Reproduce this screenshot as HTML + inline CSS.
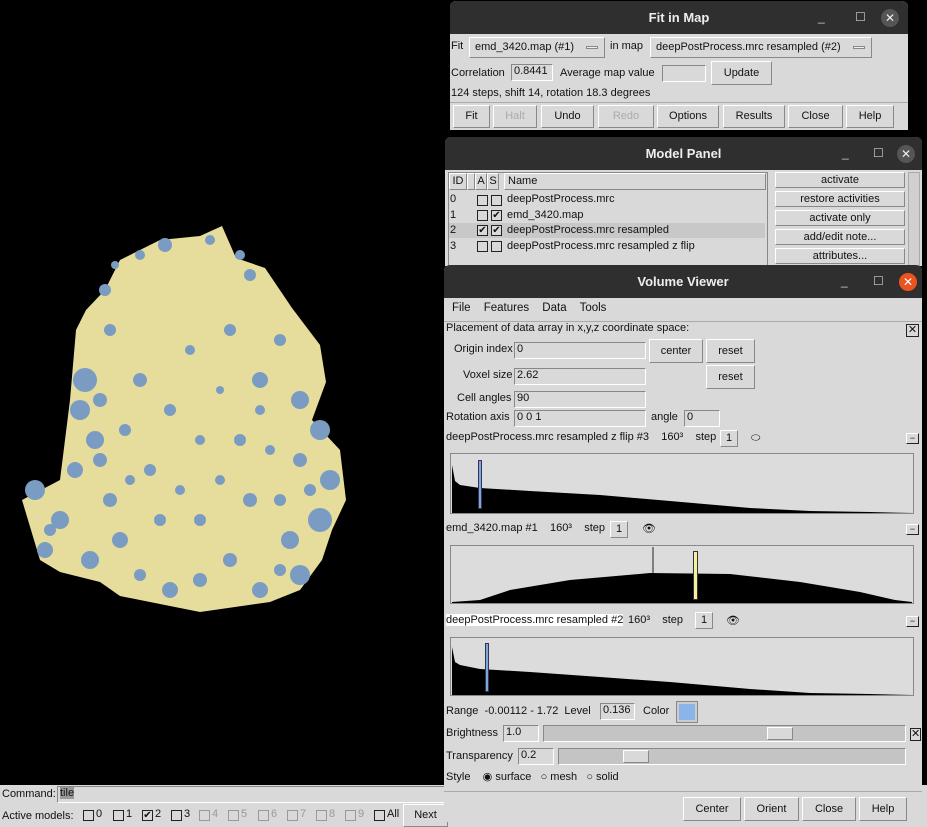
<!DOCTYPE html>
<html><head><meta charset="utf-8"><style>
*{box-sizing:border-box;margin:0;padding:0}
html,body{width:927px;height:827px;overflow:hidden}
body{background:#000;position:relative;font-family:"Liberation Sans",sans-serif;font-size:11px;color:#111}
.a{position:absolute}
.win{position:absolute;background:#d9d9d9;border-radius:6px 6px 0 0;overflow:hidden}
.tb{position:absolute;left:0;right:0;top:0;height:33px;background:#2f2f2f;color:#eee;font-weight:bold;font-size:13px;text-align:center;line-height:33px}
.tb .c{position:absolute;top:8px;width:18px;height:18px;border-radius:50%;background:#555;color:#eee;font-size:12px;line-height:18px;text-align:center;font-weight:normal}
.tb .m{position:absolute;top:0;color:#ccc;font-weight:normal;font-size:12px}
.btn{position:absolute;background:#d9d9d9;border:1px solid;border-color:#fff #888 #888 #fff;text-align:center;font-size:11px}
.fld{position:absolute;background:#d9d9d9;border:1px solid;border-color:#888 #fff #fff #888;padding-left:2px;font-size:11px}
.cb{position:absolute;width:11px;height:11px;border:1px solid #222;background:#d9d9d9;font-size:10px;line-height:9px;text-align:center}
.gb{position:absolute;width:11px;height:11px;border:1px solid #999;background:#d9d9d9}
.g{color:#999}
</style></head><body>

<svg class="a" style="left:0;top:0" width="445" height="785">
<polygon fill="#e6dd9c" points="120,260 160,240 200,236 222,226 236,258 265,268 292,308 320,345 326,382 312,420 340,450 346,500 332,530 322,560 300,590 270,602 200,612 150,602 120,596 100,582 60,572 40,560 22,500 60,480 70,400 76,330 86,310 105,290"/>
<g fill="#7b9cc2">
<circle cx="105" cy="290" r="6"/><circle cx="140" cy="255" r="5"/><circle cx="165" cy="245" r="7"/><circle cx="210" cy="240" r="5"/><circle cx="250" cy="275" r="6"/>
<circle cx="85" cy="380" r="12"/><circle cx="80" cy="410" r="10"/><circle cx="95" cy="440" r="9"/><circle cx="75" cy="470" r="8"/><circle cx="35" cy="490" r="10"/>
<circle cx="60" cy="520" r="9"/><circle cx="45" cy="550" r="8"/><circle cx="90" cy="560" r="9"/><circle cx="120" cy="540" r="8"/><circle cx="110" cy="500" r="7"/>
<circle cx="150" cy="470" r="6"/><circle cx="170" cy="410" r="6"/><circle cx="140" cy="380" r="7"/><circle cx="190" cy="350" r="5"/><circle cx="230" cy="330" r="6"/>
<circle cx="260" cy="380" r="8"/><circle cx="300" cy="400" r="9"/><circle cx="320" cy="430" r="10"/><circle cx="300" cy="460" r="7"/><circle cx="330" cy="480" r="10"/>
<circle cx="320" cy="520" r="12"/><circle cx="290" cy="540" r="9"/><circle cx="300" cy="575" r="10"/><circle cx="260" cy="590" r="8"/><circle cx="230" cy="560" r="7"/>
<circle cx="200" cy="580" r="7"/><circle cx="170" cy="590" r="8"/><circle cx="140" cy="575" r="6"/><circle cx="200" cy="520" r="6"/><circle cx="250" cy="500" r="7"/>
<circle cx="240" cy="440" r="6"/><circle cx="200" cy="440" r="5"/><circle cx="125" cy="430" r="6"/><circle cx="110" cy="330" r="6"/><circle cx="280" cy="340" r="6"/>
<circle cx="240" cy="255" r="5"/><circle cx="115" cy="265" r="4"/><circle cx="50" cy="530" r="6"/><circle cx="270" cy="450" r="5"/><circle cx="160" cy="520" r="6"/>
<circle cx="100" cy="460" r="7"/><circle cx="130" cy="480" r="5"/><circle cx="180" cy="490" r="5"/><circle cx="220" cy="480" r="5"/><circle cx="280" cy="500" r="6"/>
<circle cx="310" cy="490" r="6"/><circle cx="280" cy="570" r="6"/><circle cx="100" cy="400" r="7"/><circle cx="260" cy="410" r="5"/><circle cx="220" cy="390" r="4"/>
</g></svg>

<!-- bottom strip -->
<div class="a" style="left:0;top:785px;width:927px;height:42px;background:#d9d9d9"></div>
<div class="a" style="left:2px;top:788px">Command:</div>
<div class="fld" style="left:57px;top:786px;width:390px;height:17px"><span style="background:#999">tile</span></div>
<div class="a" style="left:2px;top:810px">Active models:</div>
<div class="cb" style="left:83px;top:810px"></div><div class="a" style="left:96px;top:808px">0</div>
<div class="cb" style="left:113px;top:810px"></div><div class="a" style="left:126px;top:808px">1</div>
<div class="cb" style="left:142px;top:810px">✔</div><div class="a" style="left:155px;top:808px">2</div>
<div class="cb" style="left:171px;top:810px"></div><div class="a" style="left:184px;top:808px">3</div>
<div class="gb" style="left:199px;top:810px"></div><div class="a g" style="left:212px;top:808px">4</div>
<div class="gb" style="left:228px;top:810px"></div><div class="a g" style="left:241px;top:808px">5</div>
<div class="gb" style="left:258px;top:810px"></div><div class="a g" style="left:271px;top:808px">6</div>
<div class="gb" style="left:287px;top:810px"></div><div class="a g" style="left:300px;top:808px">7</div>
<div class="gb" style="left:316px;top:810px"></div><div class="a g" style="left:329px;top:808px">8</div>
<div class="gb" style="left:345px;top:810px"></div><div class="a g" style="left:358px;top:808px">9</div>
<div class="cb" style="left:374px;top:810px"></div><div class="a" style="left:387px;top:808px">All</div>
<div class="btn" style="left:403px;top:804px;width:45px;height:23px;line-height:21px">Next</div>

<!-- Fit in Map -->
<div class="win" style="left:450px;top:1px;width:458px;height:129px">
<div class="tb">Fit in Map<span class="m" style="left:368px">_</span><span class="m" style="left:405px">☐</span><span class="c" style="left:431px">✕</span></div>
<div class="a" style="left:1px;top:39px">Fit</div>
<div class="btn" style="left:19px;top:36px;width:136px;height:21px;line-height:19px;text-align:left;padding-left:5px">emd_3420.map (#1)<span class="a" style="right:6px;top:8px;width:12px;height:3px;background:#eee;border:1px solid #888"></span></div>
<div class="a" style="left:160px;top:39px">in map</div>
<div class="btn" style="left:200px;top:36px;width:222px;height:21px;line-height:19px;text-align:left;padding-left:5px">deepPostProcess.mrc resampled (#2)<span class="a" style="right:6px;top:8px;width:12px;height:3px;background:#eee;border:1px solid #888"></span></div>
<div class="a" style="left:1px;top:66px">Correlation</div>
<div class="fld" style="left:61px;top:63px;width:42px;height:17px">0.8441</div>
<div class="a" style="left:110px;top:66px">Average map value</div>
<div class="fld" style="left:212px;top:64px;width:44px;height:17px"></div>
<div class="btn" style="left:261px;top:60px;width:61px;height:24px;line-height:22px">Update</div>
<div class="a" style="left:1px;top:86px">124 steps, shift 14, rotation 18.3 degrees</div>
<div class="a" style="left:0;top:101px;width:458px;height:1px;background:#aaa"></div>
<div class="btn" style="left:3px;top:104px;width:37px;height:23px;line-height:21px">Fit</div>
<div class="btn" style="left:43px;top:104px;width:44px;height:23px;line-height:21px;color:#aaa">Halt</div>
<div class="btn" style="left:91px;top:104px;width:53px;height:23px;line-height:21px">Undo</div>
<div class="btn" style="left:148px;top:104px;width:56px;height:23px;line-height:21px;color:#aaa">Redo</div>
<div class="btn" style="left:207px;top:104px;width:62px;height:23px;line-height:21px">Options</div>
<div class="btn" style="left:273px;top:104px;width:62px;height:23px;line-height:21px">Results</div>
<div class="btn" style="left:338px;top:104px;width:55px;height:23px;line-height:21px">Close</div>
<div class="btn" style="left:396px;top:104px;width:48px;height:23px;line-height:21px">Help</div>
</div>

<!-- Model Panel -->
<div class="win" style="left:445px;top:137px;width:477px;height:129px">
<div class="tb">Model Panel<span class="m" style="left:397px">_</span><span class="m" style="left:428px">☐</span><span class="c" style="left:452px">✕</span></div>
<div class="a" style="left:3px;top:35px;width:320px;height:94px;border:1px solid #888;background:#d9d9d9"></div>
<div class="btn" style="left:4px;top:36px;width:18px;height:17px;line-height:15px">ID</div>
<div class="btn" style="left:22px;top:36px;width:8px;height:17px"></div>
<div class="btn" style="left:30px;top:36px;width:12px;height:17px;line-height:15px">A</div>
<div class="btn" style="left:42px;top:36px;width:12px;height:17px;line-height:15px">S</div>
<div class="btn" style="left:59px;top:36px;width:262px;height:17px;line-height:15px;text-align:left;padding-left:3px">Name</div>
<div class="a" style="left:4px;top:86px;width:316px;height:15px;background:#c8c8c8"></div>
<div class="a" style="left:5px;top:55px;line-height:15.5px">0<br>1<br>2<br>3</div>
<div class="cb" style="left:32px;top:58px"></div><div class="cb" style="left:46px;top:58px"></div>
<div class="cb" style="left:32px;top:73px"></div><div class="cb" style="left:46px;top:73px">✔</div>
<div class="cb" style="left:32px;top:88px">✔</div><div class="cb" style="left:46px;top:88px">✔</div>
<div class="cb" style="left:32px;top:104px"></div><div class="cb" style="left:46px;top:104px"></div>
<div class="a" style="left:62px;top:55px;line-height:15.5px">deepPostProcess.mrc<br>emd_3420.map<br>deepPostProcess.mrc resampled<br>deepPostProcess.mrc resampled z flip</div>
<div class="btn" style="left:330px;top:35px;width:130px;height:16px;line-height:14px">activate</div>
<div class="btn" style="left:330px;top:54px;width:130px;height:16px;line-height:14px">restore activities</div>
<div class="btn" style="left:330px;top:73px;width:130px;height:16px;line-height:14px">activate only</div>
<div class="btn" style="left:330px;top:92px;width:130px;height:16px;line-height:14px">add/edit note...</div>
<div class="btn" style="left:330px;top:111px;width:130px;height:16px;line-height:14px">attributes...</div>
<div class="a" style="left:463px;top:35px;width:12px;height:94px;border:1px solid #aaa;background:#d0d0d0"></div>
</div>

<!-- Volume Viewer -->
<div class="win" style="left:444px;top:265px;width:478px;height:557px">
<div class="tb">Volume Viewer<span class="m" style="left:397px">_</span><span class="m" style="left:429px">☐</span><span class="c" style="left:455px;background:#e95420;color:#fff">✕</span></div>
<div class="a" style="left:0;top:33px;width:478px;height:24px;border-bottom:1px solid #aaa"></div>
<div class="a" style="left:8px;top:37px;font-size:11.5px;word-spacing:10px">File Features Data Tools</div>
<div class="a" style="left:2px;top:57px">Placement of data array in x,y,z coordinate space:</div>
<div class="btn" style="left:462px;top:59px;width:13px;height:13px;line-height:10px;border-color:#222">✕</div>
<div class="a" style="left:10px;top:78px">Origin index</div>
<div class="fld" style="left:70px;top:77px;width:132px;height:17px">0</div>
<div class="btn" style="left:205px;top:74px;width:54px;height:24px;line-height:22px">center</div>
<div class="btn" style="left:262px;top:74px;width:49px;height:24px;line-height:22px">reset</div>
<div class="a" style="left:19px;top:104px">Voxel size</div>
<div class="fld" style="left:70px;top:103px;width:132px;height:17px">2.62</div>
<div class="btn" style="left:262px;top:100px;width:49px;height:24px;line-height:22px">reset</div>
<div class="a" style="left:13px;top:127px">Cell angles</div>
<div class="fld" style="left:70px;top:126px;width:132px;height:17px">90</div>
<div class="a" style="left:2px;top:146px">Rotation axis</div>
<div class="fld" style="left:70px;top:145px;width:132px;height:17px">0 0 1</div>
<div class="a" style="left:207px;top:146px">angle</div>
<div class="fld" style="left:240px;top:145px;width:36px;height:17px">0</div>

<div class="a" style="left:2px;top:166px">deepPostProcess.mrc resampled z flip #3 &nbsp;&nbsp; 160³ &nbsp;&nbsp; step</div>
<div class="btn" style="left:276px;top:165px;width:18px;height:17px;line-height:15px">1</div>
<div class="a" style="left:307px;top:167px">⬭</div>
<div class="btn" style="left:462px;top:168px;width:13px;height:11px;border-color:#fff #222 #222 #fff;font-size:9px;line-height:8px">−</div>
<svg class="a" style="left:6px;top:188px" width="464" height="62"><rect x="0.5" y="0.5" width="463" height="60" fill="#dcdcdc" stroke="#888"/>
<polygon fill="#000" points="2,58 2,12 5,28 10,32 30,35 80,38 150,42 220,48 300,55 360,58 420,59 463,60 2,60"/></svg>
<div class="a" style="left:34px;top:195px;width:4px;height:49px;background:#7fa6d9;border:1px solid #335"></div>

<div class="a" style="left:2px;top:257px">emd_3420.map #1 &nbsp;&nbsp; 160³ &nbsp;&nbsp; step</div>
<div class="btn" style="left:166px;top:256px;width:18px;height:17px;line-height:15px">1</div>
<div class="a" style="left:198px;top:257px">👁︎</div>
<div class="btn" style="left:462px;top:259px;width:13px;height:11px;border-color:#fff #222 #222 #fff;font-size:9px;line-height:8px">−</div>
<svg class="a" style="left:6px;top:280px" width="464" height="60"><rect x="0.5" y="0.5" width="463" height="58" fill="#dcdcdc" stroke="#888"/>
<path fill="#000" d="M2,57 L30,55 L60,45 L120,35 L200,28 L280,29 L350,37 L410,47 L445,55 L462,57 L462,58 L2,58Z"/>
<line x1="203" y1="2" x2="203" y2="28" stroke="#222"/></svg>
<div class="a" style="left:249px;top:286px;width:5px;height:49px;background:#f3f0a0;border:1px solid #333"></div>

<div class="a" style="left:2px;top:349px;background:#fff">deepPostProcess.mrc resampled #2</div>
<div class="a" style="left:184px;top:349px">160³ &nbsp;&nbsp; step</div>
<div class="btn" style="left:251px;top:347px;width:18px;height:17px;line-height:15px">1</div>
<div class="a" style="left:282px;top:349px">👁︎</div>
<div class="btn" style="left:462px;top:351px;width:13px;height:11px;border-color:#fff #222 #222 #fff;font-size:9px;line-height:8px">−</div>
<svg class="a" style="left:6px;top:372px" width="464" height="60"><rect x="0.5" y="0.5" width="463" height="58" fill="#dcdcdc" stroke="#888"/>
<polygon fill="#000" points="2,58 2,10 5,25 10,28 30,32 80,35 150,40 220,45 300,52 360,56 420,57 463,58"/></svg>
<div class="a" style="left:41px;top:378px;width:4px;height:49px;background:#7fa6d9;border:1px solid #335"></div>

<div class="a" style="left:2px;top:440px">Range &nbsp;-0.00112 - 1.72 &nbsp;Level</div>
<div class="fld" style="left:156px;top:438px;width:35px;height:17px">0.136</div>
<div class="a" style="left:199px;top:440px">Color</div>
<div class="a" style="left:233px;top:437px;width:20px;height:20px;background:#8ab4ea;border:2px solid #ccc;outline:1px solid #888"></div>
<div class="a" style="left:2px;top:462px">Brightness</div>
<div class="fld" style="left:59px;top:460px;width:36px;height:17px">1.0</div>
<div class="fld" style="left:99px;top:460px;width:363px;height:17px;background:#c4c4c4"></div>
<div class="btn" style="left:323px;top:462px;width:26px;height:13px"></div>
<div class="btn" style="left:466px;top:463px;width:11px;height:13px;line-height:10px;border-color:#222">✕</div>
<div class="a" style="left:2px;top:485px">Transparency</div>
<div class="fld" style="left:74px;top:483px;width:36px;height:17px">0.2</div>
<div class="fld" style="left:114px;top:483px;width:348px;height:17px;background:#c4c4c4"></div>
<div class="btn" style="left:179px;top:485px;width:26px;height:13px"></div>
<div class="a" style="left:2px;top:505px">Style &nbsp;&nbsp;&nbsp;◉ surface &nbsp;&nbsp;○ mesh &nbsp;&nbsp;○ solid</div>
<div class="a" style="left:0;top:526px;width:478px;height:1px;background:#aaa"></div>
<div class="btn" style="left:239px;top:532px;width:58px;height:24px;line-height:22px">Center</div>
<div class="btn" style="left:300px;top:532px;width:55px;height:24px;line-height:22px">Orient</div>
<div class="btn" style="left:358px;top:532px;width:54px;height:24px;line-height:22px">Close</div>
<div class="btn" style="left:415px;top:532px;width:48px;height:24px;line-height:22px">Help</div>
</div>
</body></html>
